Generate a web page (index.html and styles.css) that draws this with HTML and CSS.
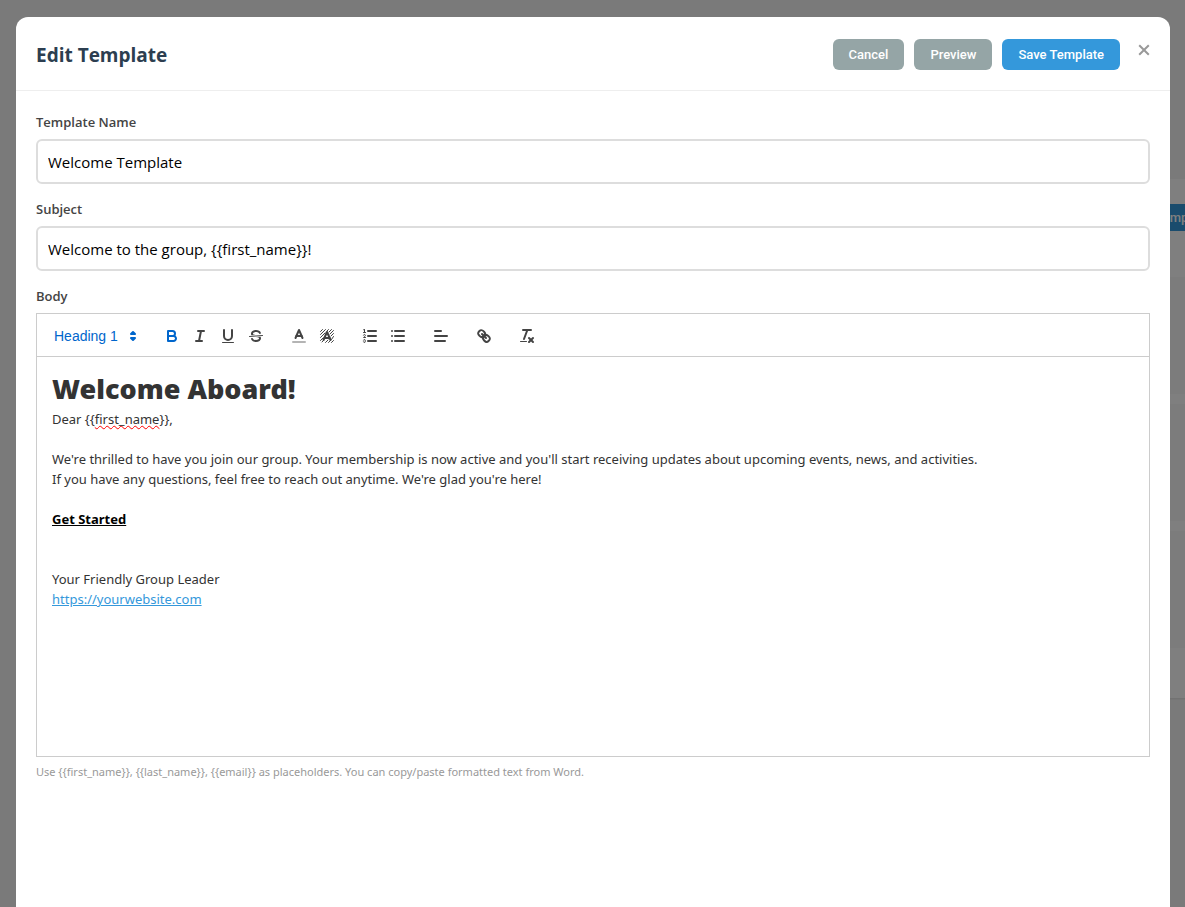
FILE: index.html
```html
<!DOCTYPE html>
<html lang="en">
<head>
  <meta charset="UTF-8">
  <meta name="viewport" content="width=device-width, initial-scale=1.0">
  <title>Edit Template</title>
  <link rel="stylesheet" href="styles.css">
</head>
<body>
  <main class="page">
    <section class="card">
      <div class="card-header">
        <button type="button" class="card-btn">New Template</button>
      </div>
      <div class="item"></div>
      <div class="item"></div>
      <div class="item"></div>
    </section>
  </main>

  <div class="overlay">
    <div class="modal" role="dialog" aria-labelledby="modal-title">
      <header class="modal-header">
        <h2 id="modal-title">Edit Template</h2>
        <div class="actions">
          <button type="button" class="btn btn-secondary">Cancel</button>
          <button type="button" class="btn btn-secondary">Preview</button>
          <button type="button" class="btn btn-primary">Save Template</button>
          <button type="button" class="close" aria-label="Close">
            <svg viewBox="0 0 12 12"><path d="M1.2 1.2L10.8 10.8M10.8 1.2L1.2 10.8"/></svg>
          </button>
        </div>
      </header>

      <form class="modal-body">
        <div class="form-group">
          <label for="name">Template Name</label>
          <input type="text" id="name" value="Welcome Template">
        </div>
        <div class="form-group">
          <label for="subject">Subject</label>
          <input type="text" id="subject" value="Welcome to the group, {{first_name}}!">
        </div>
        <div class="form-group">
          <label id="body-label">Body</label>

          <div class="toolbar">
            <span class="formats">
              <span class="picker">
                <select aria-label="Heading">
                  <option>Heading 1</option>
                  <option>Heading 2</option>
                  <option>Heading 3</option>
                  <option>Normal</option>
                </select>
                <svg viewBox="0 0 18 18"><polygon class="fill stroke" points="7 11 9 13 11 11 7 11"/><polygon class="fill stroke" points="7 7 9 5 11 7 7 7"/></svg>
              </span>
            </span>
            <span class="formats">
              <button type="button" class="tool active" aria-label="Bold">
                <svg viewBox="0 0 18 18"><path class="stroke" d="M5,4H9.5A2.5,2.5,0,0,1,12,6.5v0A2.5,2.5,0,0,1,9.5,9H5A0,0,0,0,1,5,9V4A0,0,0,0,1,5,4Z"/><path class="stroke" d="M5,9h5.5A2.5,2.5,0,0,1,13,11.5v0A2.5,2.5,0,0,1,10.5,14H5a0,0,0,0,1,0,0V9A0,0,0,0,1,5,9Z"/></svg>
              </button>
              <button type="button" class="tool" aria-label="Italic">
                <svg viewBox="0 0 18 18"><line class="stroke" x1="7" x2="13" y1="4" y2="4"/><line class="stroke" x1="5" x2="11" y1="14" y2="14"/><line class="stroke" x1="8" x2="10" y1="14" y2="4"/></svg>
              </button>
              <button type="button" class="tool" aria-label="Underline">
                <svg viewBox="0 0 18 18"><path class="stroke" d="M5,3V9a4.012,4.012,0,0,0,4,4H9a4.012,4.012,0,0,0,4-4V3"/><rect class="fill" height="1" rx="0.5" ry="0.5" width="12" x="3" y="15"/></svg>
              </button>
              <button type="button" class="tool" aria-label="Strike">
                <svg viewBox="0 0 18 18"><line class="stroke thin" x1="15.5" x2="2.5" y1="8.5" y2="9.5"/><path class="fill" d="M9.007,8C6.542,7.791,6,7.519,6,6.5,6,5.792,7.283,5,9,5c1.571,0,2.765.679,2.969,1.309a1,1,0,0,0,1.9-.617C13.356,4.106,11.354,3,9,3,6.2,3,4,4.538,4,6.5a3.2,3.2,0,0,0,.5,1.843Z"/><path class="fill" d="M8.984,10C11.457,10.208,12,10.479,12,11.5c0,0.708-1.283,1.5-3,1.5-1.571,0-2.765-.679-2.969-1.309a1,1,0,1,0-1.9.617C4.644,13.894,6.646,15,9,15c2.8,0,5-1.538,5-3.5a3.2,3.2,0,0,0-.5-1.843Z"/></svg>
              </button>
            </span>
            <span class="formats">
              <button type="button" class="tool" aria-label="Text color">
                <svg viewBox="0 0 18 18"><line class="stroke faded" x1="3" x2="15" y1="15" y2="15"/><polyline class="stroke" points="5.5 11 9 3 12.5 11"/><line class="stroke" x1="11.63" x2="6.38" y1="9" y2="9"/></svg>
              </button>
              <button type="button" class="tool" aria-label="Background color">
                <svg viewBox="0 0 18 18">
                  <path class="stroke thin" d="M2.5 4.5L4.5 2.5M2.5 7.5L7.5 2.5M2.5 10.5L7 6M9 4L10.5 2.5M2.5 13.5L5 11M11 5L13.5 2.5M4 15L5 14M12 7L15.5 3.5M13 9L15.5 6.5M7.5 15.5L10 13M13.5 12.5L15.5 9.5M10.5 15.5L12 14M13.5 15.5L15.5 13.5"/>
                  <polyline class="stroke" points="5.5 13 9 5 12.5 13"/><line class="stroke" x1="11.63" x2="6.38" y1="11" y2="11"/>
                </svg>
              </button>
            </span>
            <span class="formats">
              <button type="button" class="tool" aria-label="Numbered list">
                <svg viewBox="0 0 18 18"><line class="stroke" x1="7" x2="15" y1="4" y2="4"/><line class="stroke" x1="7" x2="15" y1="9" y2="9"/><line class="stroke" x1="7" x2="15" y1="14" y2="14"/><line class="stroke thin" x1="2.5" x2="4.5" y1="5.5" y2="5.5"/><path class="fill" d="M3.5,6A0.5,0.5,0,0,1,3,5.5V3.085l-0.276.138A0.5,0.5,0,0,1,2.053,3c-0.124-.247-0.023-0.324.224-0.447l1-.5A0.5,0.5,0,0,1,4,2.5v3A0.5,0.5,0,0,1,3.5,6Z"/><path class="stroke thin" d="M4.5,10.5h-2c0-.234,1.85-1.076,1.85-2.234A0.959,0.959,0,0,0,2.5,8.156"/><path class="stroke thin" d="M2.5,14.846a0.959,0.959,0,0,0,1.85-.109A0.7,0.7,0,0,0,3.75,14a0.688,0.688,0,0,0,.6-0.736,0.959,0.959,0,0,0-1.85-.109"/></svg>
              </button>
              <button type="button" class="tool" aria-label="Bullet list">
                <svg viewBox="0 0 18 18"><line class="stroke" x1="6" x2="15" y1="4" y2="4"/><line class="stroke" x1="6" x2="15" y1="9" y2="9"/><line class="stroke" x1="6" x2="15" y1="14" y2="14"/><line class="stroke" x1="3" x2="3" y1="4" y2="4"/><line class="stroke" x1="3" x2="3" y1="9" y2="9"/><line class="stroke" x1="3" x2="3" y1="14" y2="14"/></svg>
              </button>
            </span>
            <span class="formats">
              <button type="button" class="tool" aria-label="Align">
                <svg viewBox="0 0 18 18"><line class="stroke" x1="3" x2="15" y1="9" y2="9"/><line class="stroke" x1="3" x2="13" y1="14" y2="14"/><line class="stroke" x1="3" x2="9" y1="4" y2="4"/></svg>
              </button>
            </span>
            <span class="formats">
              <button type="button" class="tool" aria-label="Link">
                <svg viewBox="0 0 18 18"><line class="stroke" x1="7" x2="11" y1="7" y2="11"/><path class="stroke" d="M8.9,4.577a3.476,3.476,0,0,1,.36,4.679A3.476,3.476,0,0,1,4.577,8.9C3.185,7.5,2.035,6.4,4.217,4.217S7.5,3.185,8.9,4.577Z"/><path class="stroke" d="M13.423,9.1a3.476,3.476,0,0,0-4.679-.36,3.476,3.476,0,0,0,.36,4.679c1.392,1.392,2.5,2.542,4.679.36S14.815,10.5,13.423,9.1Z"/></svg>
              </button>
            </span>
            <span class="formats">
              <button type="button" class="tool" aria-label="Clear formatting">
                <svg viewBox="0 0 18 18"><line class="stroke" x1="5" x2="13" y1="3" y2="3"/><line class="stroke" x1="6" x2="9.35" y1="12" y2="3"/><line class="stroke" x1="11" x2="15" y1="11" y2="15"/><line class="stroke" x1="15" x2="11" y1="11" y2="15"/><rect class="fill" height="1" rx="0.5" ry="0.5" width="7" x="2" y="14"/></svg>
              </button>
            </span>
          </div>

          <div class="editor" contenteditable="true" spellcheck="false" role="textbox" aria-multiline="true" aria-labelledby="body-label">
            <h1>Welcome Aboard!</h1>
            <p>Dear {{<span class="misspelled">first_name</span>}},</p>
            <p><br></p>
            <p>We're thrilled to have you join our group. Your membership is now active and you'll start receiving updates about upcoming events, news, and activities.</p>
            <p>If you have any questions, feel free to reach out anytime. We're glad you're here!</p>
            <p><br></p>
            <p><strong class="cta">Get Started</strong></p>
            <p><br></p>
            <p><br></p>
            <p>Your Friendly Group Leader</p>
            <p><a href="https://yourwebsite.com">https://yourwebsite.com</a></p>
          </div>
          <p class="hint">Use {{first_name}}, {{last_name}}, {{email}} as placeholders. You can copy/paste formatted text from Word.</p>
        </div>
      </form>
    </div>
  </div>
</body>
</html>
```
FILE: styles.css
```css
* { box-sizing: border-box; }
body { margin: 0; height: 100vh; overflow: hidden; background: #f5f5f5; color: #333; font-family: "Segoe UI", "Open Sans", "Noto Sans", sans-serif; font-size: 14px; }
h1, h2, p { margin: 0; }
button, input, select { font-family: inherit; }

/* page behind the modal */
.page { padding-top: 179px; margin: 0 -65px 0 20px; }
.card { padding: 25px 25px 50px; background: #fff; box-shadow: 0 1px 2px rgba(0, 0, 0, 0.1); }
.card-header { display: flex; justify-content: flex-end; height: 73px; }
.card-btn { height: 27px; padding: 0 15px; border: none; border-radius: 4px; background: #3498db; color: #fff; font-family: Roboto, sans-serif; font-size: 13px; font-weight: 500; }
.item { height: 117px; background: #f9f9f9; }
.item + .item { margin-top: 10px; }

.overlay { position: fixed; inset: 0; padding: 17px 15px 0 16px; background: rgba(0, 0, 0, 0.5); }
.modal { height: 100%; background: #fff; border-radius: 12px 12px 0 0; overflow: hidden; }
.modal-header { display: flex; justify-content: space-between; align-items: center; padding: 22px 20px 20px; border-bottom: 1px solid #eee; }
.modal-header h2 { color: #2c3e50; font-size: 19px; font-weight: 700; line-height: 28px; }
.actions { display: flex; gap: 10px; }
.btn { height: 31px; padding: 0 16px; border: none; border-radius: 6px; color: #fff; font-family: Roboto, Arial, sans-serif; font-size: 13px; font-weight: 500; cursor: pointer; }
.btn-secondary { background: #95a5a6; }
.btn-primary { background: #3498db; }
.close { width: 20px; height: 24px; padding: 0; border: none; background: none; text-align: right; cursor: pointer; }
.close svg { width: 12px; height: 12px; fill: none; stroke: #999; stroke-width: 2; }

.modal-body { padding: 20px; }
.form-group { margin-bottom: 14px; }
.form-group label { display: block; margin-bottom: 5px; color: #444; font-size: 13px; font-weight: 600; line-height: 23px; }
.form-group input { display: block; width: 100%; height: 45px; padding: 1px 10px 0; border: 2px solid #ddd; border-radius: 6px; background: #fff; color: #000; font-size: 15px; }

/* editor */
.toolbar { display: flex; padding: 10px 8px 8px; border: 1px solid #ccc; border-bottom: none; font-family: "Liberation Sans", Arial, sans-serif; }
.formats { display: flex; margin-right: 15px; }
.picker { position: relative; width: 98px; height: 24px; color: #06c; }
.picker select { width: 100%; height: 24px; padding: 0 9px; border: none; background: none; color: inherit; font-size: 14px; font-weight: 500; appearance: none; }
.picker svg { position: absolute; right: 1px; top: 3px; width: 18px; height: 18px; pointer-events: none; }
.tool { width: 28px; height: 24px; padding: 3px 5px; border: none; background: none; color: #444; cursor: pointer; }
.tool.active { color: #06c; }
.tool svg { display: block; width: 18px; height: 18px; }
.stroke { fill: none; stroke: currentColor; stroke-width: 2; stroke-linecap: round; stroke-linejoin: round; }
.fill { fill: currentColor; }
.thin { stroke-width: 1; }
.faded { opacity: 0.4; }

.editor { height: 401px; padding: 12px 15px; border: 1px solid #ccc; font-family: "Segoe UI", "Noto Sans", sans-serif; font-size: 13px; line-height: 20px; outline: none; }
.editor h1 { font-size: 27px; font-weight: 900; line-height: 40px; }
.editor a { color: #3498db; }
.misspelled { text-decoration: underline wavy #f00 1px; text-decoration-skip-ink: none; }
.cta { color: #000; text-decoration: underline; }
.hint { margin-top: 5px; color: #999; font-family: "Segoe UI", "Noto Sans", sans-serif; font-size: 11px; line-height: 20px; }
```
